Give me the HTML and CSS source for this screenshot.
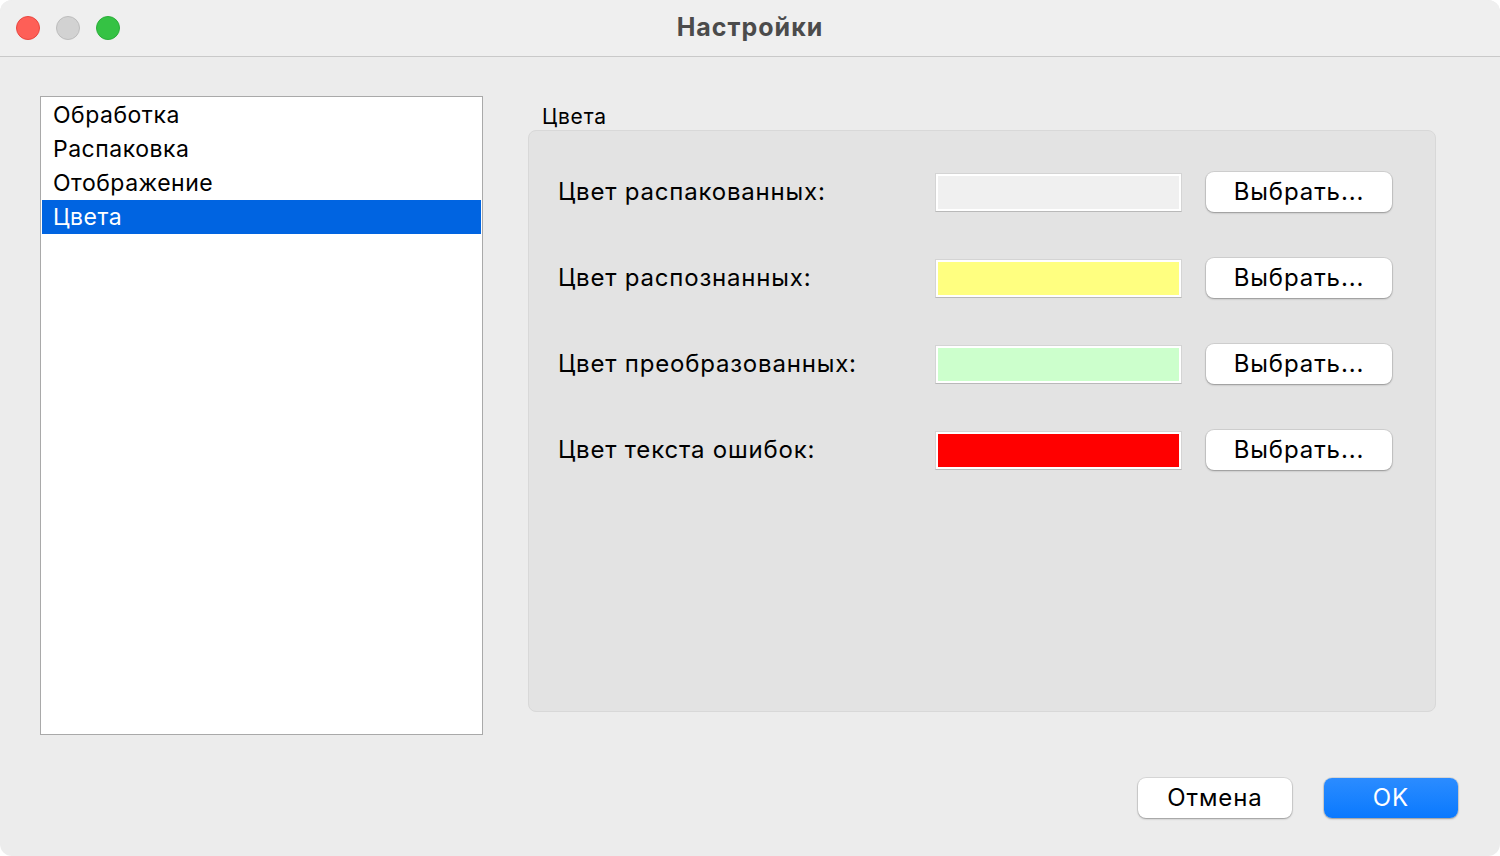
FILE: index.html
```html
<!DOCTYPE html>
<html lang="ru">

<head>
    <meta charset="UTF-8">
    <title>Настройки</title>
    <link rel="stylesheet" href="styles.css">
</head>

<body>
    <div class="window">
        <!-- Заголовок окна -->
        <div class="titlebar">
            <div class="lights">
                <span class="light red"></span>
                <span class="light gray"></span>
                <span class="light green"></span>
            </div>
            <div class="title">Настройки</div>
            <div></div>
        </div>

        <div class="content">
            <div class="main">
                <!-- Список разделов -->
                <ul class="sections">
                    <li>Обработка</li>
                    <li>Распаковка</li>
                    <li>Отображение</li>
                    <li class="selected">Цвета</li>
                </ul>

                <!-- Группа настроек цветов -->
                <div class="group">
                    <div class="group-label">Цвета</div>
                    <div class="group-box">
                        <div class="color-row">
                            <span class="color-label">Цвет распакованных:</span>
                            <span class="swatch"><span class="fill unpacked"></span></span>
                            <button class="btn">Выбрать...</button>
                        </div>
                        <div class="color-row">
                            <span class="color-label">Цвет распознанных:</span>
                            <span class="swatch"><span class="fill recognized"></span></span>
                            <button class="btn">Выбрать...</button>
                        </div>
                        <div class="color-row">
                            <span class="color-label">Цвет преобразованных:</span>
                            <span class="swatch"><span class="fill converted"></span></span>
                            <button class="btn">Выбрать...</button>
                        </div>
                        <div class="color-row">
                            <span class="color-label">Цвет текста ошибок:</span>
                            <span class="swatch"><span class="fill errors"></span></span>
                            <button class="btn">Выбрать...</button>
                        </div>
                    </div>
                </div>
            </div>

            <!-- Кнопки диалога -->
            <div class="actions">
                <button class="btn cancel">Отмена</button>
                <button class="btn primary">OK</button>
            </div>
        </div>
    </div>
</body>

</html>
```

FILE: styles.css
```css
/* Общие стили */
body {
    margin: 0;
    background: #ffffff;
    font-family: Inter, 'Liberation Sans', sans-serif;
    color: #000;
}

.window {
    width: 1500px;
    height: 856px;
    background: #ececec;
    border-radius: 12px;
    overflow: hidden;
    display: flex;
    flex-direction: column;
}

/* Заголовок */
.titlebar {
    height: 56px;
    background: #efefef;
    border-bottom: 1px solid #c9c9c9;
    display: grid;
    grid-template-columns: 1fr auto 1fr;
    align-items: center;
}

.lights {
    display: flex;
    gap: 16px;
    padding-left: 16px;
}

.light {
    width: 24px;
    height: 24px;
    border-radius: 50%;
    box-sizing: border-box;
}

.light.red {
    background: #fe5f57;
    border: 1px solid #e9463f;
}

.light.gray {
    background: #d2d2d2;
    border: 1px solid #bdbdbd;
}

.light.green {
    background: #35c244;
    border: 1px solid #2aae39;
}

.title {
    font-size: 25px;
    font-weight: 700;
    letter-spacing: 1px;
    color: #4b4b4b;
    padding-bottom: 2px;
}

/* Содержимое */
.content {
    flex: 1;
    padding: 39px 42px 0 40px;
    display: flex;
    flex-direction: column;
}

.main {
    display: flex;
    gap: 45px;
}

.sections {
    list-style: none;
    margin: 0;
    padding: 1px 1px 0;
    width: 443px;
    height: 639px;
    box-sizing: border-box;
    background: #fff;
    border: 1px solid #a9a9a9;
}

.sections li {
    height: 34px;
    line-height: 34px;
    padding-left: 11px;
    font-size: 23px;
    letter-spacing: 0.5px;
}

.sections li.selected {
    background: #0064e1;
    color: #fff;
}

.group {
    display: flex;
    flex-direction: column;
}

.group-label {
    font-size: 21px;
    letter-spacing: 0.8px;
    padding-left: 14px;
    height: 34px;
    line-height: 42px;
}

.group-box {
    width: 908px;
    height: 582px;
    box-sizing: border-box;
    background: #e3e3e3;
    border: 1px solid #d8d8d8;
    border-radius: 8px;
    padding: 41px 0 0 29px;
    display: flex;
    flex-direction: column;
    gap: 46px;
}

.color-row {
    display: grid;
    grid-template-columns: 377px 247px 24px 186px;
    align-items: center;
    height: 40px;
}

.color-row .btn {
    grid-column: 4;
}

.color-label {
    font-size: 24px;
    letter-spacing: 0.8px;
    padding-bottom: 2px;
}

.swatch {
    height: 39px;
    box-sizing: border-box;
    background: #fff;
    padding: 2px;
    border: 1px solid #d4d4d4;
    border-bottom-color: #b9b9b9;
    display: flex;
}

.fill {
    flex: 1;
}

.fill.unpacked {
    background: #f0f0f0;
}

.fill.recognized {
    background: #ffff80;
}

.fill.converted {
    background: #ccffcc;
}

.fill.errors {
    background: #ff0000;
}

/* Кнопки */
.btn {
    height: 40px;
    border: none;
    border-radius: 8px;
    background: #fff;
    font-family: inherit;
    font-size: 24px;
    letter-spacing: 0.9px;
    color: #000;
    box-shadow: 0 0 0 1px rgba(0, 0, 0, 0.08), 0 1px 2px rgba(0, 0, 0, 0.3);
    padding: 0 0 2px;
}

.actions {
    margin-top: 43px;
    display: flex;
    justify-content: flex-end;
    gap: 32px;
}

.btn.cancel {
    width: 154px;
}

.btn.primary {
    width: 134px;
    color: #fff;
    background: linear-gradient(#2b8cff, #0a79fe);
}
```
